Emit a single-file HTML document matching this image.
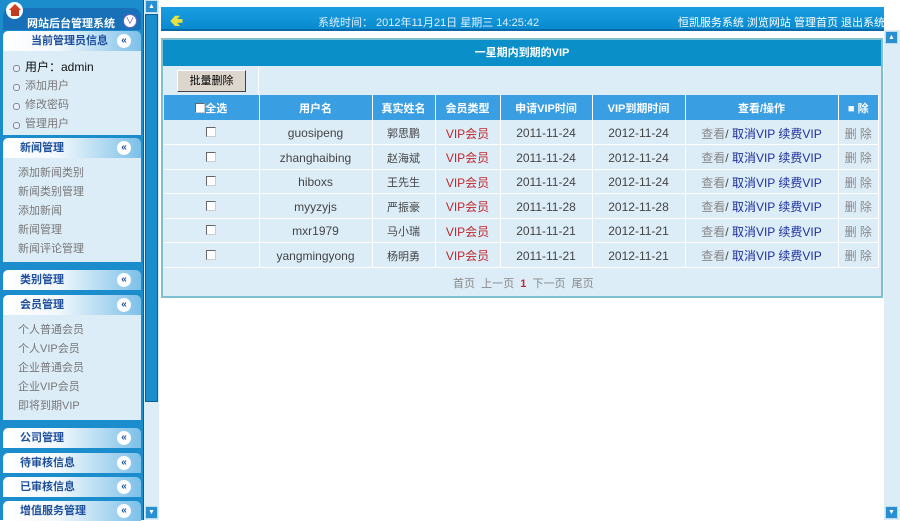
<!DOCTYPE html>
<html><head><meta charset="utf-8">
<style>
*{margin:0;padding:0;box-sizing:border-box}
body{width:900px;height:520px;overflow:hidden;background:#fff;font-family:"Liberation Sans","Noto Sans CJK SC",sans-serif;font-size:12px;position:relative}
.a{position:absolute}
#side{left:0;top:0;width:143px;height:520px;background:#1b8ccc}
.hd{position:absolute;left:3px;width:138px;height:20px;background:linear-gradient(90deg,#fff 0%,#f2f8fc 40%,#7cc0e8 100%);border-radius:5px 5px 0 0;font-weight:bold;color:#1d4f9c;font-size:11px;line-height:20px}
.hd .t{position:absolute;left:17px}
.hd .c{position:absolute;right:10px;top:3px;width:14px;height:14px;border-radius:7px;background:#fff;color:#1d4f9c;font-size:10px;line-height:13px;text-align:center}
.ct{position:absolute;left:3px;width:138px;background:#dcedf8;color:#777;font-size:11px}
.ct div{height:19px;line-height:19px;padding-left:15px}
.ct.b div{padding-left:22px;position:relative}
.ct.b div:before{content:"";position:absolute;left:10px;top:7px;width:5px;height:5px;border-radius:3px;border:1px solid #7a8a99;background:#eef}
#sb{left:143px;top:0;width:16px;height:520px;background:#dcedf8;border-left:1px solid #0a5f95}
table{border-collapse:collapse;position:absolute;left:164px;top:95px;width:715px}
td,th{text-align:center;border-right:1px solid #fff;font-size:11px;vertical-align:middle}
th{background:#3a9ee2;color:#fff;height:25px;font-weight:bold}
td{height:24.5px;color:#444;border-bottom:1px solid #fff;font-size:12px;padding-top:2px}
td.s{font-size:11px}
.ck{display:inline-block;width:10px;height:10px;border:1px solid #666;border-right-color:#ccc;border-bottom-color:#ccc;background:#fff}
.r{color:#c0282c}.bl{color:#1d2f9c}.g{color:#888}
</style></head><body>
<div id="side" class="a">
 <div class="a" style="left:3px;top:8px;width:138px;height:22px;background:#1770b8;border-radius:8px 8px 0 0"></div>
 <div class="a" style="left:6px;top:2px;width:17px;height:17px;border-radius:9px;background:#fff"></div>
 <div class="a" style="left:9px;top:4px;width:0;height:0;border-left:6px solid transparent;border-right:6px solid transparent;border-bottom:6px solid #d04020"></div>
 <div class="a" style="left:11px;top:10px;width:8px;height:6px;background:#c03a20"></div>
 <div class="a" style="left:27px;top:15px;color:#fff;font-weight:bold;font-size:11px">网站后台管理系统</div>
 <div class="a" style="left:123px;top:14px;width:14px;height:14px;border-radius:7px;background:#fff;border:1px solid #6a6ac0;color:#5050b0;font-size:9px;line-height:12px;text-align:center">&#8744;</div>
 <div class="hd" style="top:31px"><span class="t" style="left:28px">当前管理员信息</span><span class="c">«</span></div>
 <div class="ct b" style="top:51px;height:84px;padding-top:7px"><div style="color:#111;font-size:12px">用户：admin</div><div>添加用户</div><div>修改密码</div><div>管理用户</div></div>
 <div class="hd" style="top:138px"><span class="t">新闻管理</span><span class="c">«</span></div>
 <div class="ct" style="top:158px;height:104px;padding-top:6px"><div>添加新闻类别</div><div>新闻类别管理</div><div>添加新闻</div><div>新闻管理</div><div>新闻评论管理</div></div>
 <div class="hd" style="top:270px"><span class="t">类别管理</span><span class="c">«</span></div>
 <div class="hd" style="top:295px"><span class="t">会员管理</span><span class="c">«</span></div>
 <div class="ct" style="top:315px;height:105px;padding-top:6px"><div>个人普通会员</div><div>个人VIP会员</div><div>企业普通会员</div><div>企业VIP会员</div><div>即将到期VIP</div></div>
 <div class="hd" style="top:428px"><span class="t">公司管理</span><span class="c">«</span></div>
 <div class="hd" style="top:453px"><span class="t">待审核信息</span><span class="c">«</span></div>
 <div class="hd" style="top:477px"><span class="t">已审核信息</span><span class="c">«</span></div>
 <div class="hd" style="top:501px"><span class="t">增值服务管理</span><span class="c">«</span></div>
</div>
<div id="sb" class="a">
 <div class="a" style="left:1px;top:0;width:13px;height:13px;background:#2a8fd0;border:1px solid #bde;color:#fff;font-size:7px;text-align:center;line-height:11px">▲</div>
 <div class="a" style="left:1px;top:14px;width:13px;height:388px;background:#1b8ccc;border:1px solid #0a5f95"></div>
 <div class="a" style="left:1px;top:506px;width:13px;height:13px;background:#2a8fd0;border:1px solid #bde;color:#fff;font-size:7px;text-align:center;line-height:11px">▼</div>
</div>
<div class="a" style="left:884px;top:30px;width:16px;height:490px;background:#dcedf8"></div>
<div class="a" style="left:885px;top:31px;width:13px;height:13px;background:#2a8fd0;border:1px solid #bde;color:#fff;font-size:7px;text-align:center;line-height:11px">▲</div>
<div class="a" style="left:885px;top:506px;width:13px;height:13px;background:#2a8fd0;border:1px solid #bde;color:#fff;font-size:7px;text-align:center;line-height:11px">▼</div>
<div class="a" style="left:161px;top:7px;width:723px;height:24px;background:linear-gradient(#1a9ee0,#0a8ad0);border-bottom:2px solid #0a6aa8"></div>
<div class="a" style="left:170px;top:10px;color:#e8e040;font-size:16px;font-weight:bold">&#129152;</div>
<div class="a" style="left:318px;top:14px;color:#e0f0ff;font-size:11px">系统时间： 2012年11月21日 星期三 14:25:42</div>
<div class="a" style="right:15px;top:14px;color:#fff;font-size:11px;white-space:nowrap">恒凯服务系统 浏览网站 管理首页 退出系统</div>
<div class="a" style="left:161px;top:38px;width:722px;height:260px;background:#dcedf8;border:2px solid #7fc0d0"></div>
<div class="a" style="left:163px;top:40px;width:718px;height:26px;background:#0a8fc8;color:#fff;font-weight:bold;text-align:center;line-height:27px;font-size:11px">一星期内到期的VIP</div>
<div class="a" style="left:258px;top:67px;width:1px;height:28px;background:#fff"></div>
<div class="a" style="left:177px;top:70px;width:69px;height:22px;background:#ddd6cc;border:1px solid #fff;border-right-color:#444;border-bottom-color:#444;text-align:center;line-height:20px;font-size:11px">批量删除</div>
<table>
<tr><th style="width:95px"><span class="ck" style="vertical-align:-1px"></span>全选</th><th style="width:113px">用户名</th><th style="width:63px">真实姓名</th><th style="width:65px">会员类型</th><th style="width:92px">申请VIP时间</th><th style="width:93px">VIP到期时间</th><th style="width:153px">查看/操作</th><th>■ 除</th></tr>
<tr><td><span class="ck"></span></td><td>guosipeng</td><td class="s">郭思鹏</td><td class="r">VIP会员</td><td>2011-11-24</td><td>2012-11-24</td><td><span class="g">查看</span>/ <span class="bl">取消VIP 续费VIP</span></td><td class="g">删 除</td></tr>
<tr><td><span class="ck"></span></td><td>zhanghaibing</td><td class="s">赵海斌</td><td class="r">VIP会员</td><td>2011-11-24</td><td>2012-11-24</td><td><span class="g">查看</span>/ <span class="bl">取消VIP 续费VIP</span></td><td class="g">删 除</td></tr>
<tr><td><span class="ck"></span></td><td>hiboxs</td><td class="s">王先生</td><td class="r">VIP会员</td><td>2011-11-24</td><td>2012-11-24</td><td><span class="g">查看</span>/ <span class="bl">取消VIP 续费VIP</span></td><td class="g">删 除</td></tr>
<tr><td><span class="ck"></span></td><td>myyzyjs</td><td class="s">严振豪</td><td class="r">VIP会员</td><td>2011-11-28</td><td>2012-11-28</td><td><span class="g">查看</span>/ <span class="bl">取消VIP 续费VIP</span></td><td class="g">删 除</td></tr>
<tr><td><span class="ck"></span></td><td>mxr1979</td><td class="s">马小瑞</td><td class="r">VIP会员</td><td>2011-11-21</td><td>2012-11-21</td><td><span class="g">查看</span>/ <span class="bl">取消VIP 续费VIP</span></td><td class="g">删 除</td></tr>
<tr><td><span class="ck"></span></td><td>yangmingyong</td><td class="s">杨明勇</td><td class="r">VIP会员</td><td>2011-11-21</td><td>2012-11-21</td><td><span class="g">查看</span>/ <span class="bl">取消VIP 续费VIP</span></td><td class="g">删 除</td></tr>
</table>
<div class="a" style="left:453px;top:275px;color:#888;font-size:11px">首页&nbsp; 上一页&nbsp; <b style="color:#c0282c">1</b>&nbsp; 下一页&nbsp; 尾页</div>
</body></html>
